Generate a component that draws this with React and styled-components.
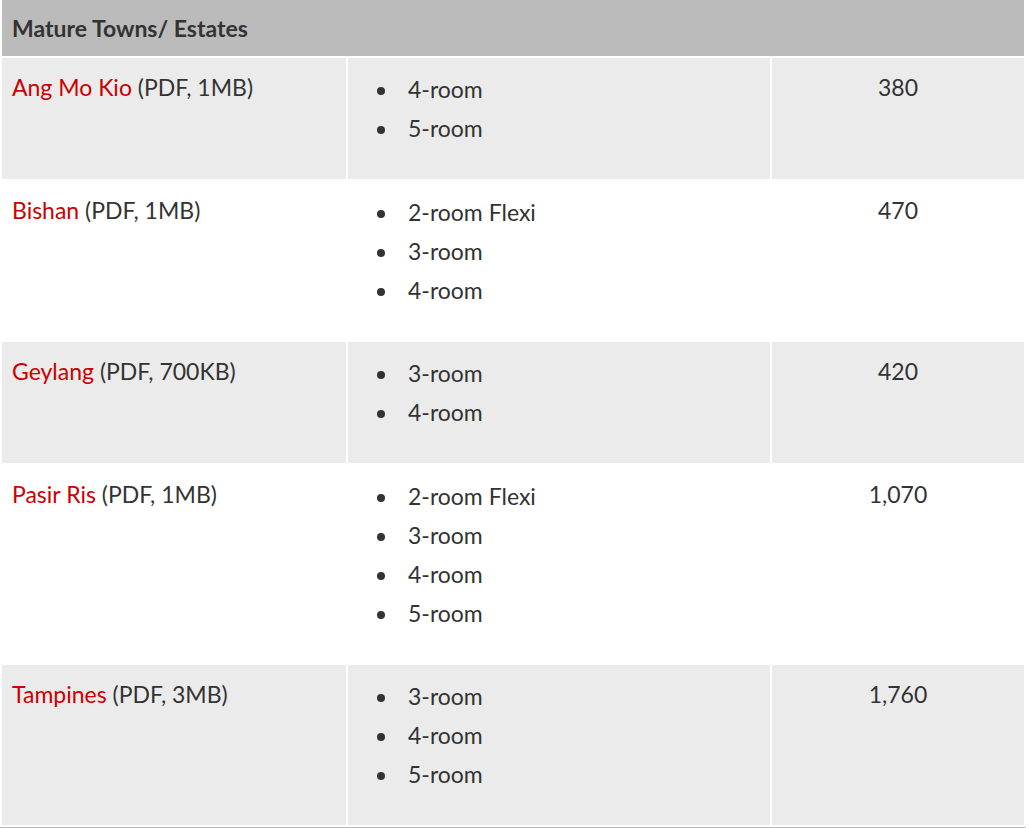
import * as React from 'react';
import styled, { createGlobalStyle } from 'styled-components';

const towns = [
  { name: 'Ang Mo Kio', file: 'PDF, 1MB', rooms: ['4-room', '5-room'], units: '380' },
  { name: 'Bishan', file: 'PDF, 1MB', rooms: ['2-room Flexi', '3-room', '4-room'], units: '470' },
  { name: 'Geylang', file: 'PDF, 700KB', rooms: ['3-room', '4-room'], units: '420' },
  {
    name: 'Pasir Ris',
    file: 'PDF, 1MB',
    rooms: ['2-room Flexi', '3-room', '4-room', '5-room'],
    units: '1,070',
  },
  { name: 'Tampines', file: 'PDF, 3MB', rooms: ['3-room', '4-room', '5-room'], units: '1,760' },
];

function App() {
  return (
    <>
      <GlobalStyle />
      <Table>
        <colgroup>
          <col style={{ width: 344 }} />
          <col style={{ width: 422 }} />
          <col />
        </colgroup>
        <thead>
          <tr>
            <HeaderCell colSpan={3}>Mature Towns/ Estates</HeaderCell>
          </tr>
        </thead>
        <tbody>
          {towns.map((town, i) => (
            <tr key={town.name}>
              <Cell striped={i % 2 === 0}>
                <TownLink href="#">{town.name}</TownLink> ({town.file})
              </Cell>
              <Cell striped={i % 2 === 0}>
                <RoomList>
                  {town.rooms.map(room => (
                    <Room key={room}>{room}</Room>
                  ))}
                </RoomList>
              </Cell>
              <Cell striped={i % 2 === 0} center>
                {town.units}
              </Cell>
            </tr>
          ))}
        </tbody>
      </Table>
    </>
  );
}

const GlobalStyle = createGlobalStyle`
  body {
    margin: 0;
    background: #fff;
    font-family: Lato, "Open Sans", "Liberation Sans", sans-serif;
    color: #333;
  }
`;

const Table = styled.table`
  width: 1026px;
  margin-top: -2px;
  table-layout: fixed;
  border-collapse: separate;
  border-spacing: 2px;
  border-bottom: 2px solid #bbb;
  font-size: 23px;
`;

const HeaderCell = styled.th`
  padding: 10px;
  line-height: 36px;
  text-align: left;
  font-size: 23px;
  font-weight: 700;
  color: #333;
  background: #bbb;
`;

const Cell = styled.td`
  padding: 10px;
  vertical-align: top;
  line-height: 39px;
  text-align: ${props => (props.center ? 'center' : 'left')};
  background: ${props => (props.striped ? '#ebebeb' : '#fff')};
`;

const TownLink = styled.a`
  color: #cc0000;
  text-decoration: none;
`;

const RoomList = styled.ul`
  margin: 2px 0 20.5px;
  padding-left: 41px;
  list-style: disc;
`;

const Room = styled.li`
  padding-left: 9px;
`;

export default App;
